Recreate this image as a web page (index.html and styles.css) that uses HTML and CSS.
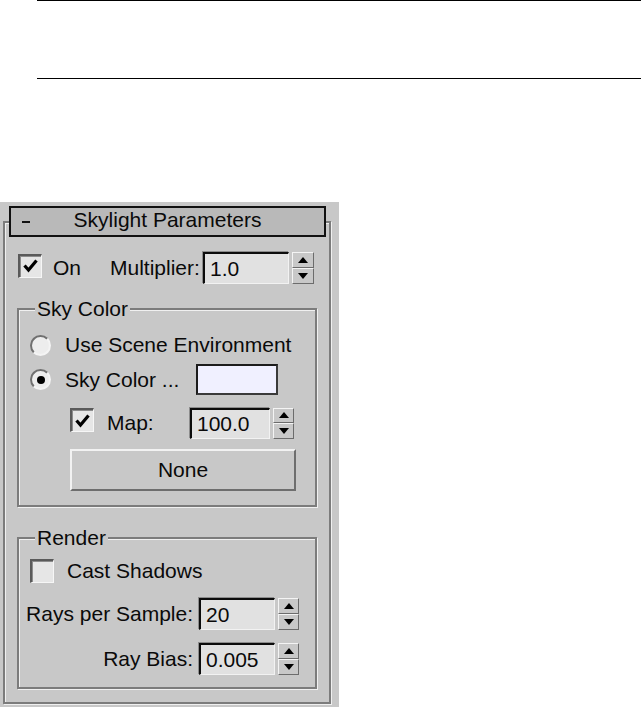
FILE: index.html
```html
<!DOCTYPE html>
<html>
<head>
<meta charset="utf-8">
<title>Skylight Parameters</title>
<link rel="stylesheet" href="styles.css">
</head>
<body>
<div class="doc-rules"></div>
<div class="panel">
  <div class="rollout">
    <div class="rollout-header">
      <span class="collapse"></span>
      <span class="rollout-title">Skylight Parameters</span>
      <span></span>
    </div>

    <div class="row row-on">
      <span class="checkbox cb-on"><svg viewBox="0 0 20 20" width="20" height="20"><polyline points="3.5,9.5 7.5,14 15.5,4.5" fill="none" stroke="#000" stroke-width="3.2"/></svg></span>
      <span class="lbl lbl-on">On</span>
      <span class="lbl lbl-mult">Multiplier:</span>
      <span class="field f-mult">1.0</span>
      <span class="spin spin-mult"><span class="spin-btn"><i class="arr-up"></i></span><span class="spin-btn"><i class="arr-down"></i></span></span>
    </div>

    <div class="group group-sky">
      <div class="group-title">Sky Color</div>
      <div class="row row-env">
        <span class="radio"></span>
        <span class="lbl">Use Scene Environment</span>
      </div>
      <div class="row row-skycol">
        <span class="radio selected"><i class="dot"></i></span>
        <span class="lbl lbl-skycol">Sky Color ...</span>
        <span class="swatch"></span>
      </div>
      <div class="row row-map">
        <span class="checkbox cb-map"><svg viewBox="0 0 20 20" width="20" height="20"><polyline points="3.5,9.5 7.5,14 15.5,4.5" fill="none" stroke="#000" stroke-width="3.2"/></svg></span>
        <span class="lbl lbl-map">Map:</span>
        <span class="field f-map">100.0</span>
        <span class="spin spin-map"><span class="spin-btn"><i class="arr-up"></i></span><span class="spin-btn"><i class="arr-down"></i></span></span>
      </div>
      <div class="btn-none">None</div>
    </div>

    <div class="group group-render">
      <div class="group-title">Render</div>
      <div class="row row-cast">
        <span class="checkbox cb-cast"></span>
        <span class="lbl">Cast Shadows</span>
      </div>
      <div class="row row-rays">
        <span class="lbl lbl-right">Rays per Sample:</span>
        <span class="field f-render">20</span>
        <span class="spin spin-render"><span class="spin-btn"><i class="arr-up"></i></span><span class="spin-btn"><i class="arr-down"></i></span></span>
      </div>
      <div class="row row-bias">
        <span class="lbl lbl-right">Ray Bias:</span>
        <span class="field f-render">0.005</span>
        <span class="spin spin-render"><span class="spin-btn"><i class="arr-up"></i></span><span class="spin-btn"><i class="arr-down"></i></span></span>
      </div>
    </div>
  </div>
</div>
</body>
</html>
```

FILE: styles.css
```css
html, body {
  margin: 0;
  padding: 0;
  background: #ffffff;
}

body {
  font-family: "Liberation Sans", Arial, sans-serif;
  font-size: 21px;
  color: #0a0a0a;
  overflow: hidden;
}

.doc-rules {
  margin-left: 37px;
  height: 77px;
  border-top: 1px solid #000;
  border-bottom: 1px solid #000;
}

.panel {
  margin-top: 123px;
  width: 339px;
  background: #c8c8c8;
  padding: 19px 0 3px 3px;
  box-sizing: border-box;
}

.rollout {
  box-sizing: border-box;
  width: 328px;
  border: 2px solid #7c7c7c;
  box-shadow: inset 1px 1px 0 #f0f0f0, 1px 1px 0 #f0f0f0;
  padding-bottom: 13px;
}

.rollout-header {
  box-sizing: border-box;
  margin: -17px 0 0 4px;
  width: 317px;
  height: 31px;
  border: 2px solid #111;
  background: #b9b9b9;
  display: grid;
  grid-template-columns: 1fr auto 1fr;
  align-items: center;
}

.collapse {
  display: block;
  width: 8px;
  height: 2px;
  background: #111;
  margin-left: 11px;
  margin-top: 1px;
}

.rollout-title {
  line-height: 24px;
  margin-top: -4px;
}

.row {
  display: flex;
  align-items: center;
}

.lbl {
  white-space: nowrap;
  line-height: 24px;
}

/* checkbox */
.checkbox {
  box-sizing: border-box;
  width: 24px;
  height: 24px;
  flex: none;
  background: #e6e6e6;
  border-style: solid;
  border-width: 2px 1px 1px 2px;
  border-color: #5a5a5a #f6f6f6 #f6f6f6 #5a5a5a;
  box-shadow: inset 1px 1px 0 #8c8c8c;
  display: flex;
  align-items: center;
  justify-content: center;
}

/* radio */
.radio {
  box-sizing: border-box;
  width: 21px;
  height: 21px;
  flex: none;
  border-radius: 50%;
  background: #ededed;
  border: 2px solid;
  border-color: #707070 #f4f4f4 #f4f4f4 #707070;
  display: flex;
  align-items: center;
  justify-content: center;
}

.dot {
  display: block;
  width: 8px;
  height: 8px;
  border-radius: 50%;
  background: #000;
}

/* numeric field */
.field {
  box-sizing: border-box;
  flex: none;
  height: 32px;
  background: #e1e1e1;
  border-style: solid;
  border-width: 2px 1px 1px 2px;
  border-color: #0c0c0c #f2f2f2 #f2f2f2 #0c0c0c;
  box-shadow: -1px -1px 0 #8c8c8c;
  padding-left: 5px;
  line-height: 28px;
  display: flex;
  align-items: center;
}

/* spinner */
.spin {
  flex: none;
  display: flex;
  flex-direction: column;
  width: 22px;
  height: 32px;
  margin-left: 3px;
}

.spin-btn {
  box-sizing: border-box;
  flex: 1;
  background: #c8c8c8;
  border: 1px solid;
  border-color: #f4f4f4 #6c6c6c #6c6c6c #f4f4f4;
  display: flex;
  align-items: center;
  justify-content: center;
}

.arr-up, .arr-down {
  display: block;
  width: 0;
  height: 0;
  border-left: 5px solid transparent;
  border-right: 5px solid transparent;
}

.arr-up {
  border-bottom: 6px solid #000;
}

.arr-down {
  border-top: 6px solid #000;
}

/* row: On / Multiplier */
.row-on {
  margin-top: 15px;
  height: 32px;
}

.cb-on {
  margin-left: 13px;
  margin-top: -5px;
}

.lbl-on {
  margin-left: 11px;
  width: 57px;
}

.lbl-mult {
  width: 93px;
}

.f-mult {
  width: 86px;
}

/* group boxes */
.group {
  box-sizing: border-box;
  width: 300px;
  margin-left: 12px;
  border: 2px solid #7c7c7c;
  box-shadow: inset 1px 1px 0 #f0f0f0, 1px 1px 0 #f0f0f0;
}

.group-title {
  width: fit-content;
  margin: -13px 0 0 16px;
  padding: 0 2px;
  background: #c8c8c8;
  line-height: 24px;
}

.group-sky {
  margin-top: 24px;
  padding-bottom: 14px;
}

.row-env {
  margin-top: 10px;
  height: 28px;
  padding-left: 11px;
  gap: 14px;
}

.row-skycol {
  margin-top: 5px;
  height: 31px;
  padding-left: 11px;
}

.row-skycol .lbl-skycol {
  margin-left: 14px;
  width: 131px;
}

.swatch {
  box-sizing: border-box;
  width: 82px;
  height: 31px;
  background: #f0f0ff;
  border: 2px solid #1c1c1c;
  border-right-color: #3a3a3a;
  border-bottom-color: #3a3a3a;
}

.row-map {
  margin-top: 12px;
  height: 32px;
  padding-left: 51px;
}

.cb-map {
  margin-top: -6px;
}

.lbl-map {
  margin-left: 13px;
  width: 83px;
}

.f-map {
  width: 80px;
  height: 31px;
}

.spin-map {
  height: 31px;
  width: 21px;
}

.btn-none {
  box-sizing: border-box;
  margin: 10px 0 0 51px;
  width: 226px;
  height: 42px;
  border: 2px solid;
  border-color: #f2f2f2 #6e6e6e #6e6e6e #f2f2f2;
  display: flex;
  align-items: center;
  justify-content: center;
}

.group-render {
  margin-top: 30px;
  padding-bottom: 12px;
}

.row-cast {
  margin-top: 8px;
  height: 25px;
  padding-left: 11px;
  gap: 13px;
}

.row-rays {
  margin-top: 15px;
  height: 32px;
}

.row-bias {
  margin-top: 13px;
  height: 32px;
}

.lbl-right {
  width: 174px;
  text-align: right;
}

.f-render {
  width: 76px;
  margin-left: 6px;
}

.spin-render {
  width: 21px;
}
```
